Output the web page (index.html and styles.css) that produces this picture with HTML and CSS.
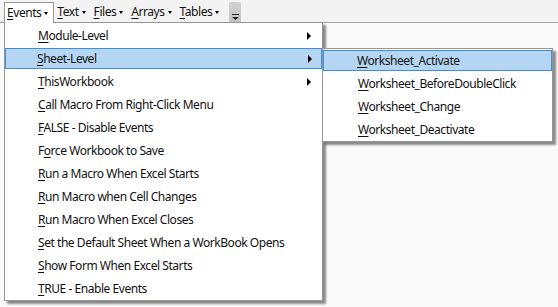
FILE: index.html
```html
<!DOCTYPE html>
<html>
<head>
<meta charset="utf-8">
<link rel="stylesheet" href="styles.css">
</head>
<body>
<div class="app">
  <div class="toolbar">
    <div class="tb-item tb-open"><span><u>E</u>vents</span><i class="dd"></i></div>
    <div class="tb-item"><span><u>T</u>ext</span><i class="dd"></i></div>
    <div class="tb-item"><span><u>F</u>iles</span><i class="dd"></i></div>
    <div class="tb-item"><span><u>A</u>rrays</span><i class="dd"></i></div>
    <div class="tb-item"><span><u>T</u>ables</span><i class="dd"></i></div>
    <div class="grip">
      <svg width="7" height="6" viewBox="0 0 7 6"><rect x="0" y="0" width="7" height="1" fill="#222"/><path d="M0 3h7L3.5 6z" fill="#222"/></svg>
    </div>
  </div>
  <div class="sheet"></div>

  <div class="menu main-menu">
    <div class="mi"><span><u>M</u>odule-Level</span><i class="arr"></i></div>
    <div class="mi hl"><span><u>S</u>heet-Level</span><i class="arr"></i></div>
    <div class="mi"><span><u>T</u>hisWorkbook</span><i class="arr"></i></div>
    <div class="mi"><span><u>C</u>all Macro From Right-Click Menu</span></div>
    <div class="mi"><span><u>F</u>ALSE - Disable Events</span></div>
    <div class="mi"><span>F<u>o</u>rce Workbook to Save</span></div>
    <div class="mi"><span><u>R</u>un a Macro When Excel Starts</span></div>
    <div class="mi"><span><u>R</u>un Macro when Cell Changes</span></div>
    <div class="mi"><span><u>R</u>un Macro When Excel Closes</span></div>
    <div class="mi"><span><u>S</u>et the Default Sheet When a WorkBook Opens</span></div>
    <div class="mi"><span><u>S</u>how Form When Excel Starts</span></div>
    <div class="mi"><span><u>T</u>RUE - Enable Events</span></div>
  </div>

  <div class="menu sub-menu">
    <div class="mi hl"><span><u>W</u>orksheet_Activate</span></div>
    <div class="mi"><span><u>W</u>orksheet_BeforeDoubleClick</span></div>
    <div class="mi"><span><u>W</u>orksheet_Change</span></div>
    <div class="mi"><span><u>W</u>orksheet_Deactivate</span></div>
  </div>
</div>
</body>
</html>
```

FILE: styles.css
```css
html, body {
  margin: 0;
  padding: 0;
}
body {
  width: 558px;
  height: 307px;
  overflow: hidden;
  background: #f8f8f8;
  font-family: "Noto Sans", "Open Sans", sans-serif;
  font-size: 12px;
  letter-spacing: -0.45px;
  color: #111;
}
.app {
  position: relative;
  width: 558px;
  height: 307px;
}
.toolbar {
  height: 23px;
  box-sizing: border-box;
  border-bottom: 1px solid #a0a0a0;
  background: #f3f3f3;
  display: flex;
  align-items: flex-end;
  padding-left: 4px;
}
.tb-item {
  height: 20px;
  box-sizing: border-box;
  display: flex;
  align-items: center;
  gap: 3px;
  padding: 0 5px 0 3px;
  line-height: 20px;
}
.tb-open {
  background: #fff;
  border: 1px solid #979797;
  border-bottom: none;
  height: 21px;
  padding: 0 5px 0 2px;
  position: relative;
  top: 1px;
  z-index: 2;
}
.dd {
  width: 0;
  height: 0;
  border-left: 2.5px solid transparent;
  border-right: 2.5px solid transparent;
  border-top: 3px solid #000;
}
.grip {
  width: 12px;
  height: 20px;
  margin-left: 5px;
  background: linear-gradient(#d2d2d2, #c4c4c4);
  border-radius: 2px 3px 0 0;
  display: flex;
  align-items: flex-end;
  justify-content: center;
  padding-bottom: 2px;
  box-sizing: border-box;
}
.grip svg { display: block; }
.sheet {
  height: 284px;
  background: #fafafa;
}
.menu {
  position: absolute;
  background: #fff;
  border: 1px solid #979797;
  box-shadow: 3px 3px 2px rgba(0,0,0,0.45);
  box-sizing: border-box;
  display: flex;
  flex-direction: column;
}
.main-menu {
  left: 4px;
  top: 22px;
  width: 319px;
  height: 279px;
  padding-top: 1px;
  z-index: 1;
}
.sub-menu {
  left: 322px;
  top: 48px;
  width: 231px;
  height: 94px;
  padding-top: 0;
  z-index: 3;
}
.mi {
  height: 23px;
  flex: none;
  box-sizing: border-box;
  display: flex;
  align-items: center;
  justify-content: space-between;
  padding: 0 9px 0 31px;
  margin: 0 1px;
  border: 1px solid transparent;
}
.sub-menu .mi {
  padding-left: 33px;
}
.mi.hl {
  background: #b5d6f2;
  border-color: #3d8ee0;
  height: 21px;
  margin: 1px 0 1px 0;
}
.arr {
  width: 0;
  height: 0;
  border-top: 4px solid transparent;
  border-bottom: 4px solid transparent;
  border-left: 4px solid #000;
}
u {
  text-decoration: underline;
  text-underline-offset: 2px;
}
```
